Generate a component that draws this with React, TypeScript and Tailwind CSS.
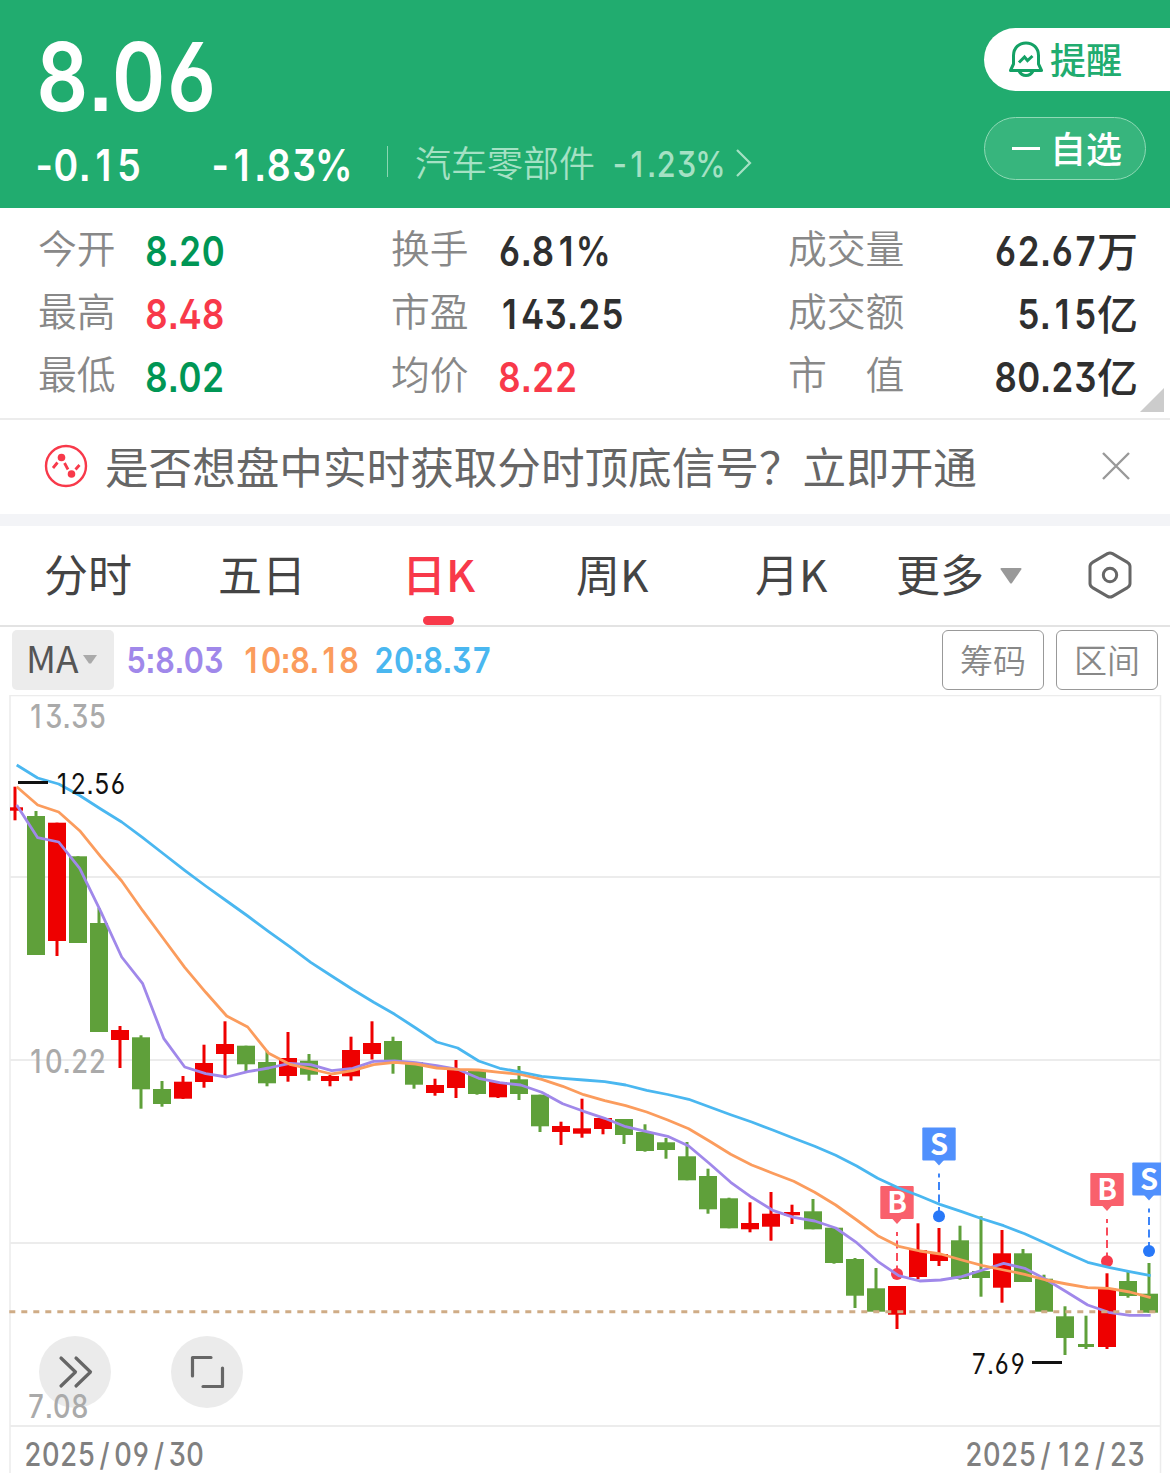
import React from 'react';
import clsx from 'clsx';

type Candle = {
  up: boolean;
  high: number;
  open: number;
  close: number;
  low: number;
  flat?: boolean;
};

const STEP = 21;
const candleX = (i: number) => 15 + i * STEP;

const c = (up: boolean, high: number, open: number, close: number, low: number, flat = false): Candle => ({
  up,
  high,
  open,
  close,
  low,
  flat,
});

const candles: Candle[] = [
  c(true, 786.7, 807.3, 810.7, 820.3, true),
  c(false, 811, 816, 955, 955),
  c(true, 822.7, 822.7, 941, 956),
  c(false, 856.3, 856.3, 943, 943),
  c(false, 908, 923, 1032, 1032),
  c(true, 1026, 1030, 1040, 1068),
  c(false, 1035.3, 1037.3, 1089.3, 1108.7),
  c(false, 1081, 1089, 1104, 1106.7),
  c(true, 1076, 1081.7, 1098.7, 1099),
  c(true, 1044.7, 1063, 1082, 1087.7),
  c(true, 1021.3, 1044, 1054, 1076),
  c(false, 1045.7, 1045.7, 1064.3, 1071.7),
  c(false, 1050.7, 1062, 1083.3, 1086.3),
  c(true, 1032, 1058, 1076, 1081.7),
  c(false, 1054, 1060.7, 1074.7, 1080.7),
  c(true, 1075, 1076, 1081, 1086.3),
  c(true, 1036.7, 1050, 1076.3, 1080.7),
  c(true, 1021.3, 1043, 1054, 1059.5),
  c(false, 1036.7, 1041, 1061.3, 1073.7),
  c(false, 1062, 1062, 1084.7, 1088.7),
  c(true, 1078.7, 1085, 1093, 1095.7),
  c(true, 1060, 1070, 1088, 1098),
  c(false, 1070.7, 1070.7, 1094, 1094.7),
  c(true, 1082, 1082, 1097.3, 1098),
  c(false, 1066, 1079.3, 1094, 1100),
  c(false, 1094.7, 1094.7, 1126.3, 1132),
  c(true, 1121.7, 1126, 1132, 1145),
  c(true, 1098.7, 1128.3, 1133.7, 1137.7),
  c(true, 1118, 1118, 1129, 1134.3),
  c(false, 1119, 1119, 1135, 1144),
  c(false, 1124.3, 1132, 1151, 1151.7),
  c(false, 1138, 1142.3, 1150, 1158.7),
  c(false, 1142, 1156.3, 1180.3, 1180.3),
  c(false, 1168.7, 1176, 1209.3, 1213.7),
  c(false, 1197.7, 1198.3, 1228.3, 1228.3),
  c(true, 1202.3, 1223, 1229.3, 1232.3),
  c(true, 1192, 1213.7, 1226.7, 1240.7),
  c(true, 1204.7, 1212, 1215.3, 1224, true),
  c(false, 1199, 1211.3, 1229.3, 1229.3),
  c(false, 1227.7, 1227.7, 1263, 1263.7),
  c(false, 1258, 1259, 1295.7, 1308),
  c(false, 1268, 1288.3, 1311.7, 1311.7),
  c(true, 1286, 1286, 1314.7, 1329),
  c(true, 1223.3, 1250, 1277, 1279.3),
  c(true, 1228, 1254, 1261, 1266),
  c(false, 1225.7, 1240.3, 1279, 1279.7),
  c(false, 1216.3, 1271, 1278, 1296.7),
  c(true, 1230, 1253.3, 1287.7, 1302.7),
  c(false, 1249, 1253.3, 1282, 1282),
  c(false, 1274.7, 1278.7, 1311.7, 1311.7),
  c(false, 1306.3, 1316.3, 1338, 1355),
  c(false, 1315.7, 1344, 1347, 1349, true),
  c(true, 1273.3, 1288.7, 1347, 1349),
  c(false, 1271, 1281, 1296, 1297.7),
  c(false, 1263, 1293.7, 1312.7, 1312.7),
];

const ma5 = [
  805, 837.7, 842, 868.3, 911.3, 957, 983.7, 1038.3, 1067, 1073.7, 1077, 1071.7, 1068, 1063.3, 1064.7, 1070.7, 1068.3,
  1061.3, 1061, 1062.7, 1065.7, 1069.3, 1078.3, 1082.7, 1085, 1092.3, 1103.7, 1111.3, 1118.3, 1126.7, 1131.7, 1136.3,
  1146, 1163.7, 1182.3, 1197.3, 1210.3, 1217.3, 1221, 1228, 1242.7, 1261.3, 1275.7, 1281, 1280, 1276.7, 1270, 1263.3,
  1268.3, 1279.3, 1292, 1305, 1312.3, 1315.3, 1315.3,
];

const ma10 = [
  786.7, 805, 812, 830.7, 856.7, 881, 910.7, 939, 967.3, 992.3, 1016, 1027, 1053.3, 1064.3, 1069, 1074, 1070.7, 1064.7,
  1062.3, 1064, 1068, 1069.3, 1070, 1072.3, 1074.3, 1079.3, 1086.3, 1094.7, 1100.7, 1105.7, 1112, 1120, 1128.7, 1141.3,
  1154.3, 1165, 1173.3, 1181.3, 1192.3, 1205, 1220, 1235.7, 1246.3, 1251, 1254, 1260, 1265.7, 1270, 1274.3, 1280, 1284,
  1287.7, 1288.3, 1292, 1297.7,
];

const ma20 = [
  765, 778, 784, 795.5, 809, 822, 837.7, 854, 870.3, 886, 901, 916, 931.7, 946.7, 962.3, 976, 989.5, 1002.3, 1014.3,
  1028, 1042, 1048, 1061, 1068.3, 1072, 1076.3, 1078.3, 1080, 1081.7, 1085, 1090.3, 1094.5, 1099.3, 1107, 1114.7, 1122,
  1130, 1138.3, 1146.3, 1155.3, 1166, 1178.3, 1188, 1196, 1204.7, 1211.7, 1219, 1225.7, 1233.7, 1243.3, 1253, 1262.3,
  1267.3, 1271.7, 1275.7,
];

const toPoints = (values: number[]) => values.map((y, i) => `${16.7 + i * STEP},${y}`).join(' ');

const signals = [
  { type: 'B', x: 897, top: 1186, dot: 1274 },
  { type: 'S', x: 939, top: 1127.5, dot: 1216.3 },
  { type: 'B', x: 1107, top: 1173, dot: 1261.3 },
  { type: 'S', x: 1149, top: 1162.5, dot: 1251 },
];

const stats = [
  [
    { label: '今开', value: '8.20', color: 'text-[#009655]' },
    { label: '换手', value: '6.81%', color: 'text-[#2f2f2f]' },
    { label: '成交量', value: '62.67', unit: '万', color: 'text-[#2f2f2f]' },
  ],
  [
    { label: '最高', value: '8.48', color: 'text-[#f8394a]' },
    { label: '市盈', value: '143.25', color: 'text-[#2f2f2f]' },
    { label: '成交额', value: '5.15', unit: '亿', color: 'text-[#2f2f2f]' },
  ],
  [
    { label: '最低', value: '8.02', color: 'text-[#009655]' },
    { label: '均价', value: '8.22', color: 'text-[#f8394a]' },
    { label: '市　值', value: '80.23', unit: '亿', color: 'text-[#2f2f2f]' },
  ],
];

const cellWidth = (ch: string) => {
  if (/\d/.test(ch)) return 'w-[0.655em]';
  if (ch === '-') return 'w-[0.44em]';
  if (ch === '%') return 'w-[0.88em]';
  return 'w-[0.29em]';
};

// Condensed digits on equal cells, with open 6 and 9 and square dots
const Num: React.FC<{ className?: string; children: string }> = ({ className, children }) => (
  <span
    className={clsx(
      "inline-flex whitespace-nowrap leading-none scale-x-[0.85] font-['Inter',sans-serif] [font-feature-settings:'ss01','cv03','cv04','ss07']",
      className
    )}
  >
    {children.split('').map((ch, i) => (
      <span key={i} className={clsx('flex shrink-0 justify-center', cellWidth(ch))}>
        {ch}
      </span>
    ))}
  </span>
);

const Header = () => (
  <header className="flex h-[208px] justify-between bg-[#21ac6f] text-white">
    <div className="pl-[36px] pt-[29px]">
      <Num className="flex! origin-left text-[95px] font-[570]">8.06</Num>
      <div className="mt-[18px] flex h-[46px] items-center">
        <div className="w-[176px]">
          <Num className="origin-left gap-[0.03em] text-[44px] font-semibold">-0.15</Num>
        </div>
        <div className="w-[175px]">
          <Num className="origin-left gap-[0.025em] text-[44px] font-semibold">-1.83%</Num>
        </div>
        <div className="h-[31px] w-px -translate-y-1 bg-[#8ad6b2]" />
        <span className="ml-[27px] -translate-y-1 text-[36px] font-[350] leading-none text-[#a5e1c4]">汽车零部件</span>
        <div className="ml-[18px] w-[122px] -translate-y-px">
          <Num className="origin-left gap-[0.01em] text-[36px] font-medium text-[#a5e1c4]">-1.23%</Num>
        </div>
        <svg width="18" height="30" viewBox="0 0 18 30" fill="none" className="-translate-y-0.5">
          <path d="M2 2L15 15L2 28" stroke="#a5e1c4" strokeWidth="2.2" />
        </svg>
      </div>
    </div>
    <div className="flex flex-col items-end gap-[26px] pt-[28px]">
      <button className="flex h-[63px] w-[186px] items-center rounded-l-full bg-white pl-[24px] text-[#21ac6f]">
        <svg
          width="36"
          height="38"
          viewBox="0 0 36 38"
          fill="none"
          stroke="#14a165"
          strokeWidth="3"
          className="-translate-y-px"
        >
          <path
            d="M5.5 24V15.5C5.5 8 11 3 18 3S30.500 8 30.500 15.500V24L33.500 30.500H2.500Z"
            strokeLinejoin="round"
          />
          <path d="M11 31C12.500 34 15 35.500 18 35.500S23.500 34 25 31" />
          <path d="M11 22.500L16.500 17L19.500 20.500L24.500 16" />
        </svg>
        <span className="ml-[6px] -translate-y-[2px] text-[36px] font-medium leading-none">提醒</span>
      </button>
      <button className="mr-[24px] flex h-[63px] w-[162px] items-center rounded-full border border-[#8fd9b5] bg-[#37b57d] pl-[27px]">
        <span className="h-[3px] w-[28px] bg-white" />
        <span className="ml-[10px] -translate-y-[2px] text-[36px] font-medium leading-none">自选</span>
      </button>
    </div>
  </header>
);

const Stats = () => (
  <section className="relative h-[212px] border-b-2 border-[#ececec] pt-[10px]">
    {stats.map((row, r) => (
      <div key={r} className="grid h-[63px] grid-cols-[353px_397px_1fr] items-center pl-[38px] pr-[32px]">
        {row.map((item) => (
          <div key={item.label} className="flex items-center">
            <span className="w-[107px] shrink-0 -translate-y-[3px] whitespace-nowrap text-[38.8px] font-[350] leading-none text-[#888]">
              {item.label}
            </span>
            {item.unit ? (
              <div className={clsx('flex flex-1 items-center justify-end', item.color)}>
                <Num className="origin-right translate-y-[2px] gap-[0.01em] text-[41px] font-semibold">
                  {item.value}
                </Num>
                <span className="text-[41px] font-medium leading-none">{item.unit}</span>
              </div>
            ) : (
              <Num className={clsx('origin-left translate-y-[2px] gap-[0.01em] text-[41px] font-semibold', item.color)}>
                {item.value}
              </Num>
            )}
          </div>
        ))}
      </div>
    ))}
    <svg width="24" height="24" viewBox="0 0 24 24" className="absolute bottom-[6px] right-[6px]">
      <path d="M24 0V24H0Z" fill="#ccc" />
    </svg>
  </section>
);

const Banner = () => (
  <section className="flex h-[94px] items-center pl-[44px] pr-[39px]">
    <svg width="44" height="44" viewBox="0 0 44 44" fill="none" stroke="#f8394a" className="-translate-y-px">
      <circle cx="22" cy="22" r="20" strokeWidth="2.4" />
      <path d="M9 24L13.500 18.500M20.500 19L24 25.500M31.500 25.500L35.500 21" strokeWidth="2.800" />
      <circle cx="17.500" cy="13.500" r="3.800" fill="#f8394a" stroke="none" />
      <circle cx="27.500" cy="30" r="3.800" fill="#f8394a" stroke="none" />
    </svg>
    <span className="ml-[17px] -translate-y-px text-[43.6px] leading-none text-[#666]">
      是否想盘中实时获取分时顶底信号？立即开通
    </span>
    <svg width="30" height="30" viewBox="0 0 30 30" className="ml-auto -translate-y-px" stroke="#999" strokeWidth="2.4">
      <path d="M2 2L28 28M28 2L2 28" />
    </svg>
  </section>
);

const tabs = [
  { label: '分时', className: 'w-[174px]' },
  { label: '五日', className: 'w-[184px]' },
  { label: '日K', className: 'w-[174px]', active: true },
  { label: '周K', className: 'w-[179px]' },
  { label: '月K', className: 'w-[141px]' },
  { label: '更多', className: 'w-[104px]' },
];

const Tabs = () => (
  <nav className="flex h-[113px] items-center border-b-2 border-t-[12px] border-b-[#e3e3e3] border-t-[#f3f4f7] pl-[44px]">
    {tabs.map((tab) => (
      <div
        key={tab.label}
        className={clsx(
          'relative flex h-full items-center pb-[6px] text-[44px]',
          tab.className,
          tab.active ? 'font-medium text-[#f8394a]' : 'text-[#444]'
        )}
      >
        {tab.label}
        {tab.active && <span className="absolute bottom-0 left-[21px] h-[9px] w-[31px] rounded-full bg-[#f8394a]" />}
      </div>
    ))}
    <svg width="22" height="16" viewBox="0 0 22 16" fill="#999">
      <path d="M1.500 0H20.500Q22 0 21.300 1.500L12 15Q11 16 10 15L.7 1.500Q0 0 1.500 0Z" />
    </svg>
    <svg
      width="44"
      height="48"
      viewBox="0 0 44 48"
      fill="none"
      stroke="#666"
      strokeWidth="3"
      className="ml-[66px] -translate-y-px"
    >
      <path
        d="M19.500 2.600Q22 1.200 24.500 2.600L39.500 11.400Q42 13 42 15.500V32.500Q42 35 39.500 36.600L24.500 45.400Q22 46.800 19.500 45.400L4.500 36.600Q2 35 2 32.500V15.500Q2 13 4.500 11.400Z"
        strokeLinejoin="round"
      />
      <circle cx="22" cy="24" r="6.700" />
    </svg>
  </nav>
);

const Indicators = () => (
  <div className="flex h-[68px] items-start pl-[12px] pr-[12px] pt-[3px]">
    <button className="flex h-[60px] w-[102px] items-center rounded-[5px] bg-[#ececec] pl-[14px] text-[37px] leading-none text-[#555]">
      <span className="-translate-y-[3px]">MA</span>
      <svg width="14" height="9" viewBox="0 0 14 9" className="ml-[4px] -translate-y-px" fill="#aaa">
        <path d="M0 0H14L8 8.500H6Z" />
      </svg>
    </button>
    <div className="flex h-[60px] items-center pl-[12px]">
      <div className="w-[115px]">
        <Num className="origin-left text-[36px] font-[560] text-[#a088ea]">5:8.03</Num>
      </div>
      <div className="w-[133px]">
        <Num className="origin-left text-[36px] font-[560] text-[#fb9c5d]">10:8.18</Num>
      </div>
      <div className="w-[120px]">
        <Num className="origin-left text-[36px] font-[560] text-[#4ab7f0]">20:8.37</Num>
      </div>
    </div>
    <div className="ml-auto flex gap-[12px]">
      {['筹码', '区间'].map((label) => (
        <button
          key={label}
          className="h-[60px] w-[102px] rounded-[6px] border border-[#999] pb-[2px] text-[33px] font-[350] leading-none text-[#888]"
        >
          {label}
        </button>
      ))}
    </div>
  </div>
);

const labelCell = (ch: string) => {
  if (ch === '/') return 0.69;
  return ch === '.' ? 0.3 : 0.655;
};

const Label: React.FC<{
  x: number;
  y: number;
  size: number;
  fill: string;
  weight?: number;
  scale?: number;
  children: string;
}> = ({ x, y, size, fill, weight = 550, scale = 0.85, children }) => {
  let cursor = 0;
  const centers = children.split('').map((ch) => {
    const w = labelCell(ch) * size;
    cursor += w;
    return cursor - w / 2;
  });

  return (
    <g transform={`translate(${x} ${y}) scale(${scale} 1)`}>
      <text
        x={centers.join(' ')}
        y="0"
        textAnchor="middle"
        fontSize={size}
        fontWeight={weight}
        fill={fill}
        className="font-['Inter',sans-serif] [font-feature-settings:'ss01','cv03','cv04','ss07']"
      >
        {children}
      </text>
    </g>
  );
};

const Chart = () => (
  <svg width="1170" height="778" viewBox="0 695 1170 778" className="block">
    <clipPath id="plot">
      <rect x="10" y="695" width="1151" height="778" />
    </clipPath>

    {/* Grid */}
    <g stroke="#ececec" strokeWidth="2">
      <path d="M10 1473V695.500H1160.500V1473" fill="none" strokeWidth="1.500" />
      <path d="M10 877H1160M10 1060H1160M10 1243H1160M10 1426H1160" />
    </g>

    {/* Floating buttons */}
    <circle cx="75" cy="1372" r="36" fill="#ebebeb" />
    <circle cx="207" cy="1372" r="36" fill="#ebebeb" />
    <g fill="none" stroke="#666" strokeWidth="3.200" strokeLinecap="round" strokeLinejoin="round">
      <path d="M61 1358L75.500 1372L61 1386M76 1358L90.500 1372L76 1386" />
      <path d="M192.500 1376V1357.500H211M222.500 1368V1386.500H203" />
    </g>

    <Label x={27} y={728} size={32} fill="#aaa">13.35</Label>
    <Label x={27} y={1073} size={32} fill="#aaa">10.22</Label>
    <Label x={27} y={1418} size={32} fill="#aaa">7.08</Label>

    <g clipPath="url(#plot)">
      {candles.map((item, i) => {
        const x = candleX(i);
        const half = item.flat ? 8 : 9;
        return (
          <g key={i} fill={item.up ? '#ee0000' : '#5fa03a'}>
            <rect x={x - 1.5} y={item.high} width="3" height={item.low - item.high} />
            <rect x={x - half} y={item.open} width={half * 2} height={item.close - item.open} />
          </g>
        );
      })}

      {/* Buy / sell marks */}
      {signals.map((s) => {
        const box = s.type === 'B' ? '#f9606c' : '#5090fd';
        const line = s.type === 'B' ? '#f8394a' : '#2878f8';
        return (
          <g key={s.x}>
            <rect x={s.x - 16.7} y={s.top} width="33.400" height="33" rx="1" fill={box} />
            <path d={`M${s.x - 5} ${s.top + 32.5}H${s.x + 5}L${s.x} ${s.top + 38}Z`} fill={box} />
            <text
              x={s.x}
              y={s.top + 27}
              textAnchor="middle"
              fontSize="29"
              fontWeight="700"
              fill="#fff"
              className="font-['Noto_Sans_CJK_SC',sans-serif]"
            >
              {s.type}
            </text>
            <path
              d={`M${s.x} ${s.top + 46}V${s.dot}`}
              stroke={line}
              strokeWidth="1.800"
              strokeDasharray="8 4.500"
              strokeDashoffset="4"
            />
            <circle cx={s.x} cy={s.dot} r="6" fill={line} />
          </g>
        );
      })}

      <g fill="none" strokeWidth="2.800" strokeLinejoin="round">
        <polyline points={toPoints(ma5)} stroke="#a088ea" />
        <polyline points={toPoints(ma10)} stroke="#fb9c5d" />
        <polyline points={toPoints(ma20)} stroke="#4ab7f0" />
      </g>
    </g>

    <path d="M9.300 1311.700H1160" stroke="#cfac86" strokeWidth="3" strokeDasharray="6 6" />

    <path d="M18 782.500H48M1032 1362.500H1062" stroke="#111" strokeWidth="3" />
    <Label x={54} y={794} size={29} fill="#111" weight={400}>12.56</Label>
    <Label x={971} y={1374} size={29} fill="#111" weight={400} scale={0.83}>7.69</Label>

    <Label x={24} y={1466} size={32} fill="#808080" weight={520}>2025/09/30</Label>
    <Label x={965} y={1466} size={32} fill="#808080" weight={520}>2025/12/23</Label>
  </svg>
);

export default function App() {
  return (
    <div className="h-[1473px] w-[1170px] overflow-hidden bg-white font-['Noto_Sans_CJK_SC',sans-serif]">
      <Header />
      <Stats />
      <Banner />
      <Tabs />
      <Indicators />
      <Chart />
    </div>
  );
}
